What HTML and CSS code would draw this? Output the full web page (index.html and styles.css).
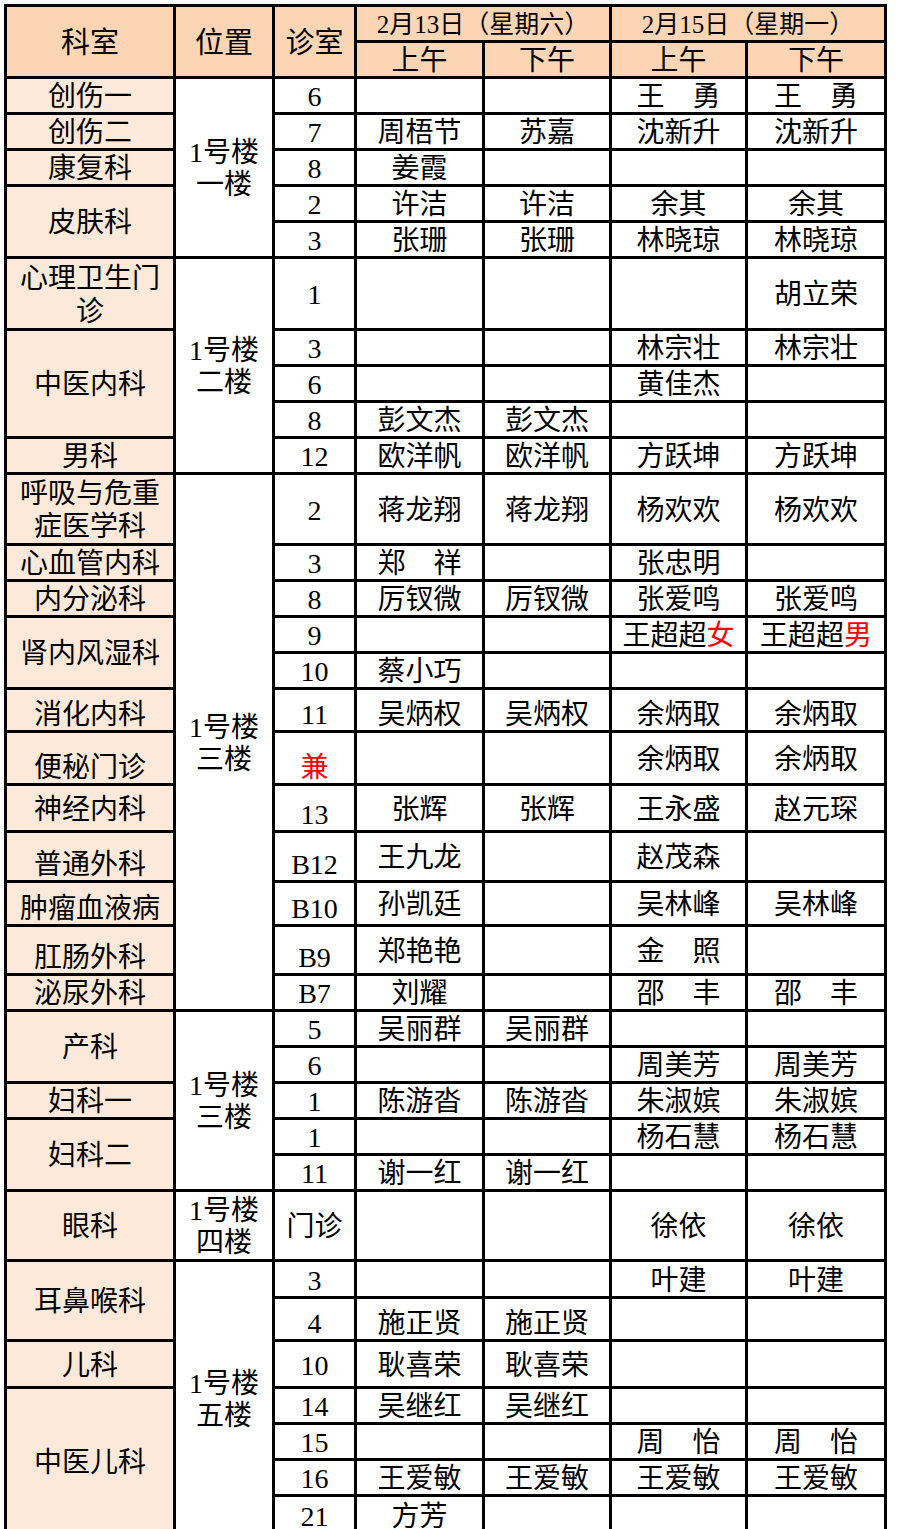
FILE: index.html
```html
<!DOCTYPE html>
<html lang="zh-CN">
<head>
<meta charset="utf-8">
<title>门诊排班表</title>
<link rel="stylesheet" href="styles.css">
</head>
<body>
<table class="sched">
  <colgroup>
    <col class="c-dept"><col class="c-loc"><col class="c-room">
    <col class="c-a"><col class="c-b"><col class="c-c"><col class="c-d">
  </colgroup>
  <thead>
    <tr class="r36">
      <th rowspan="2" class="big">科室</th>
      <th rowspan="2" class="big">位置</th>
      <th rowspan="2" class="big">诊室</th>
      <th colspan="2" class="date">2月13日（星期六）</th>
      <th colspan="2" class="date">2月15日（星期一）</th>
    </tr>
    <tr class="r36">
      <th>上午</th><th>下午</th><th>上午</th><th>下午</th>
    </tr>
  </thead>
  <tbody>
    <tr class="r36"><td class="dept">创伤一</td><td rowspan="5" class="loc">1号楼<br>一楼</td><td>6</td><td></td><td></td><td>王　勇</td><td>王　勇</td></tr>
    <tr class="r36"><td class="dept">创伤二</td><td>7</td><td>周梧节</td><td>苏嘉</td><td>沈新升</td><td>沈新升</td></tr>
    <tr class="r36"><td class="dept">康复科</td><td>8</td><td>姜霞</td><td></td><td></td><td></td></tr>
    <tr class="r36"><td class="dept" rowspan="2">皮肤科</td><td>2</td><td>许洁</td><td>许洁</td><td>余其</td><td>余其</td></tr>
    <tr class="r36"><td>3</td><td>张珊</td><td>张珊</td><td>林晓琼</td><td>林晓琼</td></tr>

    <tr class="r72"><td class="dept two">心理卫生门诊</td><td rowspan="5" class="loc">1号楼<br>二楼</td><td>1</td><td></td><td></td><td></td><td>胡立荣</td></tr>
    <tr class="r35"><td class="dept" rowspan="3">中医内科</td><td>3</td><td></td><td></td><td>林宗壮</td><td>林宗壮</td></tr>
    <tr class="r36"><td>6</td><td></td><td></td><td>黄佳杰</td><td></td></tr>
    <tr class="r36"><td>8</td><td>彭文杰</td><td>彭文杰</td><td></td><td></td></tr>
    <tr class="r36"><td class="dept">男科</td><td>12</td><td>欧洋帆</td><td>欧洋帆</td><td>方跃坤</td><td>方跃坤</td></tr>

    <tr class="r71"><td class="dept two">呼吸与危重症医学科</td><td rowspan="12" class="loc">1号楼<br>三楼</td><td>2</td><td>蒋龙翔</td><td>蒋龙翔</td><td>杨欢欢</td><td>杨欢欢</td></tr>
    <tr class="r36"><td class="dept">心血管内科</td><td>3</td><td>郑　祥</td><td></td><td>张忠明</td><td></td></tr>
    <tr class="r36"><td class="dept">内分泌科</td><td>8</td><td>厉钗微</td><td>厉钗微</td><td>张爱鸣</td><td>张爱鸣</td></tr>
    <tr class="r36"><td class="dept" rowspan="2">肾内风湿科</td><td>9</td><td></td><td></td><td class="tight">王超超<span class="red">女</span></td><td class="tight">王超超<span class="red">男</span></td></tr>
    <tr class="r36"><td>10</td><td>蔡小巧</td><td></td><td></td><td></td></tr>
    <tr class="r43 b"><td class="dept">消化内科</td><td>11</td><td>吴炳权</td><td>吴炳权</td><td>余炳取</td><td>余炳取</td></tr>
    <tr class="r53"><td class="dept b">便秘门诊</td><td class="b red">兼</td><td></td><td></td><td>余炳取</td><td>余炳取</td></tr>
    <tr class="r47"><td class="dept">神经内科</td><td class="b">13</td><td>张辉</td><td>张辉</td><td>王永盛</td><td>赵元琛</td></tr>
    <tr class="r50"><td class="dept b">普通外科</td><td class="b">B12</td><td>王九龙</td><td></td><td>赵茂森</td><td></td></tr>
    <tr class="r44"><td class="dept b">肿瘤血液病</td><td class="b">B10</td><td>孙凯廷</td><td></td><td>吴林峰</td><td>吴林峰</td></tr>
    <tr class="r49"><td class="dept b">肛肠外科</td><td class="b">B9</td><td>郑艳艳</td><td></td><td>金　照</td><td></td></tr>
    <tr class="r36"><td class="dept">泌尿外科</td><td>B7</td><td>刘耀</td><td></td><td>邵　丰</td><td>邵　丰</td></tr>

    <tr class="r36"><td class="dept" rowspan="2">产科</td><td rowspan="5" class="loc">1号楼<br>三楼</td><td>5</td><td>吴丽群</td><td>吴丽群</td><td></td><td></td></tr>
    <tr class="r36"><td>6</td><td></td><td></td><td>周美芳</td><td>周美芳</td></tr>
    <tr class="r36"><td class="dept">妇科一</td><td>1</td><td>陈游沓</td><td>陈游沓</td><td>朱淑嫔</td><td>朱淑嫔</td></tr>
    <tr class="r36"><td class="dept" rowspan="2">妇科二</td><td>1</td><td></td><td></td><td>杨石慧</td><td>杨石慧</td></tr>
    <tr class="r36"><td>11</td><td>谢一红</td><td>谢一红</td><td></td><td></td></tr>

    <tr class="r70"><td class="dept">眼科</td><td class="loc">1号楼<br>四楼</td><td>门诊</td><td></td><td></td><td>徐依</td><td>徐依</td></tr>

    <tr class="r37"><td class="dept" rowspan="2">耳鼻喉科</td><td rowspan="8" class="loc">1号楼<br>五楼</td><td>3</td><td></td><td></td><td>叶建</td><td>叶建</td></tr>
    <tr class="r43 b"><td>4</td><td>施正贤</td><td>施正贤</td><td></td><td></td></tr>
    <tr class="r47"><td class="dept">儿科</td><td>10</td><td>耿喜荣</td><td>耿喜荣</td><td></td><td></td></tr>
    <tr class="r36"><td class="dept" rowspan="4">中医儿科</td><td>14</td><td>吴继红</td><td>吴继红</td><td></td><td></td></tr>
    <tr class="r36"><td>15</td><td></td><td></td><td>周　怡</td><td>周　怡</td></tr>
    <tr class="r36"><td>16</td><td>王爱敏</td><td>王爱敏</td><td>王爱敏</td><td>王爱敏</td></tr>
    <tr class="r40"><td>21</td><td>方芳</td><td></td><td></td><td></td></tr>
  </tbody>
</table>
</body>
</html>
```

FILE: styles.css
```css
html, body {
  margin: 0;
  padding: 0;
  background: #ffffff;
}

body {
  padding: 4px 0 0 4px;
  font-family: "Liberation Serif", "Noto Sans CJK SC", serif;
  color: #000000;
}

.sched {
  border-collapse: collapse;
  table-layout: fixed;
  width: 883px;
  font-size: 28px;
  line-height: 30px;
}

.c-dept { width: 169px; }
.c-loc { width: 99px; }
.c-room { width: 82px; }
.c-a { width: 128px; }
.c-b { width: 127px; }
.c-c { width: 136px; }
.c-d { width: 139px; }

.sched th,
.sched td {
  border: 3px solid #000000;
  padding: 3px 0 0 0;
  text-align: center;
  vertical-align: middle;
  font-weight: normal;
  white-space: normal;
  overflow: hidden;
}

.sched th {
  background: #fcd5b4;
}

.sched th.big {
  font-size: 29px;
}

.sched th.date {
  font-size: 25px;
  line-height: 30px;
  padding-top: 3px;
}

.sched td.dept {
  background: #fde9d9;
}

.sched td.two {
  line-height: 33px;
  padding-top: 2px;
}

.sched td.loc {
  line-height: 32px;
  padding-top: 3px;
}

.sched td.tight {
  white-space: nowrap;
  overflow: visible;
}

.red { color: #ff0000; }

.sched tr.b > td,
.sched td.b {
  vertical-align: bottom;
}

.r35 { height: 35px; }
.r36 { height: 36px; }
.r37 { height: 37px; }
.r40 { height: 40px; }
.r43 { height: 43px; }
.r44 { height: 44px; }
.r47 { height: 47px; }
.r49 { height: 49px; }
.r50 { height: 50px; }
.r53 { height: 53px; }
.r70 { height: 70px; }
.r71 { height: 71px; }
.r72 { height: 72px; }
```
